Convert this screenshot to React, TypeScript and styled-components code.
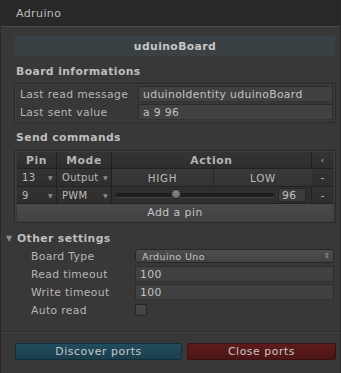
import React from "react";
import styled, { createGlobalStyle } from "styled-components";

const Global = createGlobalStyle`
  html, body { margin: 0; padding: 0; background: #383838; }
  body { font-family: "DejaVu Sans", "Liberation Sans", sans-serif; }
`;

const Window = styled.div`
  width: 341px;
  height: 373px;
  background: #383838;
  box-sizing: border-box;
  border-left: 1px solid #2a2a2a;
  border-right: 1px solid #2a2a2a;
  display: flex;
  flex-direction: column;
  color: #b8b8b8;
  font-size: 10.8px;
  overflow: hidden;
`;

const Header = styled.div`
  height: 26px;
  background: #282828;
  border-bottom: 1px solid #4a4a4a;
  display: flex;
  align-items: center;
  padding-left: 15px;
  font-size: 11px;
  color: #bdbdbd;
  letter-spacing: 0.4px;
`;

const Content = styled.div`
  padding: 8px 4px 0 13px;
  display: flex;
  flex-direction: column;
  flex: 1;
`;

const TitleBar = styled.div`
  height: 22px;
  box-sizing: border-box;
  background: #3a4144;
  border: 1px solid #323c40;
  display: flex;
  align-items: center;
  justify-content: center;
  font-weight: bold;
  color: #c6c6c6;
  letter-spacing: 0.4px;
`;

const SectionTitle = styled.div<{ $mt: number }>`
  height: 16px;
  margin-top: ${(p) => p.$mt}px;
  display: flex;
  align-items: center;
  padding-left: 2px;
  font-weight: bold;
  color: #bebebe;
  letter-spacing: 0.4px;
`;

const Box = styled.div<{ $mt: number }>`
  margin-top: ${(p) => p.$mt}px;
  border: 1px solid #2a2a2a;
  box-shadow: inset 0 0 0 1px #3e3e3e;
  display: flex;
  flex-direction: column;
`;

const InfoBox = styled(Box)`
  padding: 2px 2px 2px 5px;
  gap: 2px;
`;

const InfoRow = styled.div`
  height: 16px;
  display: grid;
  grid-template-columns: 118px 1fr;
  align-items: center;
`;

const Label = styled.span`
  letter-spacing: 0.35px;
  color: #b6b6b6;
`;

const Field = styled.div`
  height: 16px;
  box-sizing: border-box;
  background: #414141;
  border: 1px solid #2c2c2c;
  border-bottom-color: #333;
  display: flex;
  align-items: center;
  padding-left: 4px;
  color: #c2c2c2;
  letter-spacing: 0.35px;
`;

const TableBox = styled(Box)`
  padding: 1px 2px;
`;

const TRow = styled.div<{ $h: number }>`
  height: ${(p) => p.$h}px;
  display: grid;
  grid-template-columns: 40px 55px 200px 21px;
`;

const HeadCell = styled.div`
  background: linear-gradient(#343434, #2d2d2d);
  border-right: 1px solid #222;
  border-bottom: 1px solid #222;
  display: flex;
  align-items: center;
  justify-content: center;
  font-weight: bold;
  color: #b4b4b4;
  letter-spacing: 0.6px;
  &:last-child { border-right: none; font-weight: normal; font-size: 9px; }
`;

const SelCell = styled.div`
  background: linear-gradient(#333, #2e2e2e);
  border-right: 1px solid #222;
  border-bottom: 1px solid #222;
  display: flex;
  align-items: center;
  justify-content: space-between;
  padding: 0 3px 0 5px;
  color: #bababa;
  letter-spacing: 0.3px;
  font-size: 10px;
`;

const Caret = styled.span`
  font-size: 6px;
  color: #8c8c8c;
`;

const ActionCell = styled.div`
  display: grid;
  grid-template-columns: 102px 98px;
  border-right: 1px solid #222;
  border-bottom: 1px solid #222;
`;

const StateBtn = styled.div`
  background: linear-gradient(#393939, #333);
  border-right: 1px solid #262626;
  display: flex;
  align-items: center;
  justify-content: center;
  color: #bcbcbc;
  letter-spacing: 0.8px;
  font-size: 10.3px;
  &:last-child { border-right: none; }
`;

const SliderCell = styled.div`
  background: #2f2f2f;
  border-right: 1px solid #222;
  border-bottom: 1px solid #222;
  display: flex;
  align-items: center;
  padding: 0 5px 0 3px;
  gap: 4px;
`;

const Track = styled.div`
  flex: 1;
  height: 4px;
  border-radius: 2px;
  background: #1e1e1e;
  box-shadow: 0 1px 0 #444;
  position: relative;
`;

const Thumb = styled.div`
  position: absolute;
  left: 56px;
  top: -4px;
  width: 10px;
  height: 10px;
  border-radius: 50%;
  background: radial-gradient(circle at 50% 35%, #8a8a8a, #5a5a5a);
  border: 1px solid #2a2a2a;
  box-sizing: border-box;
`;

const NumField = styled.div`
  width: 28px;
  height: 14px;
  box-sizing: border-box;
  background: #3c3c3c;
  border: 1px solid #262626;
  display: flex;
  align-items: center;
  padding-left: 3px;
  color: #c0c0c0;
  letter-spacing: 0.5px;
`;

const MinusCell = styled.div`
  background: linear-gradient(#333, #2e2e2e);
  border-bottom: 1px solid #222;
  display: flex;
  align-items: center;
  justify-content: center;
  color: #b8b8b8;
`;

const AddPin = styled.div`
  height: 17px;
  background: linear-gradient(#4a4a4a, #424242);
  display: flex;
  align-items: center;
  justify-content: center;
  color: #c4c4c4;
  letter-spacing: 0.5px;
`;

const Foldout = styled.div`
  height: 16px;
  margin-top: 7px;
  margin-left: -8px;
  display: flex;
  align-items: center;
  gap: 3px;
  font-weight: bold;
  color: #bebebe;
  letter-spacing: 0.4px;
`;

const Arrow = styled.span`
  font-size: 8px;
  color: #8a8a8a;
  width: 8px;
`;

const Settings = styled.div`
  margin-top: 2px;
  padding-left: 17px;
  display: flex;
  flex-direction: column;
  gap: 2px;
`;

const SetRow = styled.div`
  height: 16px;
  display: grid;
  grid-template-columns: 104px 1fr;
  align-items: center;
  padding-right: 2px;
`;

const Dropdown = styled.div`
  height: 14px;
  box-sizing: border-box;
  border-radius: 3px;
  background: linear-gradient(#4e4e4e, #424242);
  border: 1px solid #262626;
  display: flex;
  align-items: center;
  justify-content: space-between;
  padding: 0 3px 0 6px;
  font-size: 9.5px;
  color: #c4c4c4;
  letter-spacing: 0.4px;
`;

const Updown = styled.span`
  font-size: 7px;
  color: #a0a0a0;
  line-height: 1;
`;

const Check = styled.div`
  width: 12px;
  height: 12px;
  box-sizing: border-box;
  border-radius: 2px;
  background: linear-gradient(#4a4a4a, #404040);
  border: 1px solid #262626;
`;

const Footer = styled.div`
  margin-top: auto;
  border-top: 1px solid #2c2c2c;
  box-shadow: inset 0 1px 0 #424242;
  padding: 11px 4px 13px 14px;
  display: grid;
  grid-template-columns: 167px 1fr;
  gap: 5px;
`;

const ActionButton = styled.div<{ $tone: "blue" | "red" }>`
  height: 17px;
  box-sizing: border-box;
  border-radius: 2px;
  border: 1px solid ${(p) => (p.$tone === "blue" ? "#112f3a" : "#3a1010")};
  background: ${(p) =>
    p.$tone === "blue"
      ? "linear-gradient(#214c5c, #1a3e4c)"
      : "linear-gradient(#5e1b1b, #4c1515)"};
  display: flex;
  align-items: center;
  justify-content: center;
  color: #c8c8c8;
  letter-spacing: 0.6px;
`;

export default function App() {
  return (
    <>
      <Global />
      <Window>
        <Header>Adruino</Header>
        <Content>
          <TitleBar>uduinoBoard</TitleBar>
          <SectionTitle $mt={6}>Board informations</SectionTitle>
          <InfoBox $mt={4}>
            <InfoRow>
              <Label>Last read message</Label>
              <Field>uduinoIdentity uduinoBoard</Field>
            </InfoRow>
            <InfoRow>
              <Label>Last sent value</Label>
              <Field>a 9 96</Field>
            </InfoRow>
          </InfoBox>
          <SectionTitle $mt={6}>Send commands</SectionTitle>
          <TableBox $mt={5}>
            <TRow $h={17}>
              <HeadCell>Pin</HeadCell>
              <HeadCell>Mode</HeadCell>
              <HeadCell>Action</HeadCell>
              <HeadCell>‹</HeadCell>
            </TRow>
            <TRow $h={18}>
              <SelCell>13<Caret>▼</Caret></SelCell>
              <SelCell>Output<Caret>▼</Caret></SelCell>
              <ActionCell>
                <StateBtn>HIGH</StateBtn>
                <StateBtn>LOW</StateBtn>
              </ActionCell>
              <MinusCell>-</MinusCell>
            </TRow>
            <TRow $h={17}>
              <SelCell>9<Caret>▼</Caret></SelCell>
              <SelCell>PWM<Caret>▼</Caret></SelCell>
              <SliderCell>
                <Track><Thumb /></Track>
                <NumField>96</NumField>
              </SliderCell>
              <MinusCell>-</MinusCell>
            </TRow>
            <AddPin>Add a pin</AddPin>
          </TableBox>
          <Foldout>
            <Arrow>▼</Arrow>Other settings
          </Foldout>
          <Settings>
            <SetRow>
              <Label>Board Type</Label>
              <Dropdown>Arduino Uno<Updown>⇕</Updown></Dropdown>
            </SetRow>
            <SetRow>
              <Label>Read timeout</Label>
              <Field>100</Field>
            </SetRow>
            <SetRow>
              <Label>Write timeout</Label>
              <Field>100</Field>
            </SetRow>
            <SetRow>
              <Label>Auto read</Label>
              <Check />
            </SetRow>
          </Settings>
        </Content>
        <Footer>
          <ActionButton $tone="blue">Discover ports</ActionButton>
          <ActionButton $tone="red">Close ports</ActionButton>
        </Footer>
      </Window>
    </>
  );
}
